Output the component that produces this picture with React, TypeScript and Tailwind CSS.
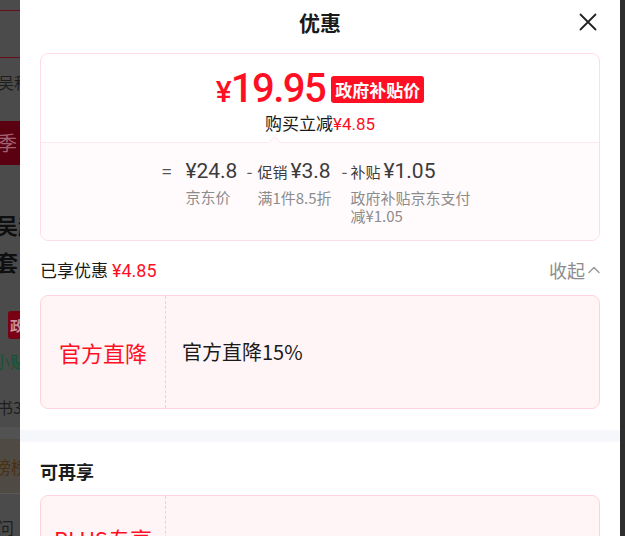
import React from "react";

const CJK = "font-['Noto_Sans_CJK_SC','Noto_Sans',sans-serif]";

function LeftStrip() {
  return (
    <div className={`w-[20px] shrink-0 h-full bg-[#4b4b4b] overflow-hidden flex flex-col ${CJK}`}>
      <div className="h-[10px]" />
      <div className="h-px bg-[#6a0d18]" />
      <div className="h-[46px]" />
      <div className="h-px bg-[#6a0d18]" />
      <div className="h-[64px] flex items-start pt-[16px]">
        <span className="ml-[-2px] text-[16px] leading-none text-[#1e1e1e] whitespace-nowrap">吴秝</span>
      </div>
      <div className="h-[44px] bg-[#5a0010] flex items-center">
        <span className="ml-[-3px] text-[20px] leading-none text-[#a26070] whitespace-nowrap">季</span>
      </div>
      <div className="h-[48px] shrink-0" />
      <span className="ml-[-4px] text-[22px] leading-none font-bold text-[#0f0f0f] whitespace-nowrap">吴赴</span>
      <div className="h-[15px] shrink-0" />
      <span className="ml-[-4px] text-[22px] leading-none font-bold text-[#0f0f0f] whitespace-nowrap">套</span>
      <div className="h-[39px] shrink-0" />
      <div className="ml-[8px] h-[28px] w-[20px] shrink-0 rounded-[3px] bg-[#7a0014] flex items-center pl-[2px]">
        <span className="text-[14px] leading-none text-[#c9909a] font-bold">政</span>
      </div>
      <div className="h-[14px] shrink-0" />
      <span className="ml-[-6px] text-[16px] leading-none text-[#13532a] whitespace-nowrap">小贴</span>
      <div className="h-[30px] shrink-0" />
      <span className="ml-[-3px] text-[16px] leading-none text-[#1e1e1e] whitespace-nowrap">书3</span>
      <div className="h-[12px] shrink-0" />
      <div className="h-[12px] shrink-0 bg-[#525252]" />
      <div className="h-[55px] shrink-0 bg-[#4f4a43] flex items-center border-b border-[#5a5a5a]">
        <span className="ml-[-6px] text-[17px] leading-none text-[#4a3012] whitespace-nowrap">榜榜</span>
      </div>
      <div className="h-[25px] shrink-0" />
      <span className="ml-[-3px] text-[17px] leading-none text-[#1e1e1e] whitespace-nowrap">问</span>
    </div>
  );
}

function CloseIcon() {
  return (
    <svg width="18" height="18" viewBox="0 0 18 18" fill="none">
      <path d="M1.5 1.5L16.5 16.5M16.5 1.5L1.5 16.5" stroke="#222" strokeWidth="1.8" strokeLinecap="round" />
    </svg>
  );
}

function ChevronUp() {
  return (
    <svg width="12" height="8" viewBox="0 0 12 8" fill="none">
      <path d="M1 6.5L6 1.5L11 6.5" stroke="#9a9a9a" strokeWidth="1.5" strokeLinecap="round" strokeLinejoin="round" />
    </svg>
  );
}

export default function App() {
  return (
    <div className="flex w-[625px] h-[536px] overflow-hidden bg-[#4b4b4b]">
      <LeftStrip />
      <div className={`w-[600px] shrink-0 h-full bg-white flex flex-col overflow-hidden ${CJK}`}>
        {/* header */}
        <div className="relative h-[44px] shrink-0 flex items-center justify-center">
          <span className="text-[21px] font-bold text-[#1a1a1a] leading-none">优惠</span>
          <div className="absolute right-[23px] top-[13px]">
            <CloseIcon />
          </div>
        </div>

        <div className="px-[20px] mt-[9px]">
          {/* summary card */}
          <div className="rounded-[8px] border border-[#ffdde5] overflow-hidden">
            <div className="h-[88px] flex flex-col items-center pt-[12px]">
              <div className="flex items-center h-[46px]">
                <span className="text-[#ff0f23] font-['Roboto',sans-serif] font-medium leading-none flex items-baseline tracking-[-1px]">
                  <span className="text-[30px]">¥</span>
                  <span className="text-[40px] tracking-[-1.5px]">19.95</span>
                </span>
                <span className="ml-[6px] h-[27px] px-[4px] rounded-[3px] bg-[#ff0f23] text-white text-[17px] font-bold flex items-center leading-none">
                  政府补贴价
                </span>
              </div>
              <div className="text-[17px] leading-none mt-[2px] text-[#1a1a1a]">
                购买立减<span className="text-[#ff0f23] font-['Roboto',sans-serif]">¥4.85</span>
              </div>
            </div>
            <div className="relative h-[98px] bg-[#fffafb] border-t border-[#ffe9ee]">
              <div className="absolute left-[229px] top-[-5px] w-[9px] h-[9px] rotate-45 bg-[#fffafb] border-l border-t border-[#ffe9ee]" />
              <div className="flex pl-[121px] pt-[16px] text-[#4a4a4a]">
                <span className="text-[17px] leading-[24px] mr-[14px] text-[#555]">=</span>
                <div className="flex flex-col w-[61px]">
                  <span className="text-[21px] leading-[24px] font-['Roboto',sans-serif] text-[#3c3c3c]">¥24.8</span>
                  <span className="text-[15px] leading-[17px] mt-[5px] text-[#8c8c8c]">京东价</span>
                </div>
                <span className="text-[17px] leading-[24px] w-[11px] text-[#555]">-</span>
                <div className="flex flex-col w-[84px]">
                  <span className="leading-[24px] text-[#3c3c3c] flex items-baseline">
                    <span className="text-[15px]">促销</span>
                    <span className="text-[21px] ml-[3px] font-['Roboto',sans-serif]">¥3.8</span>
                  </span>
                  <span className="text-[15px] leading-[17px] mt-[5px] text-[#8c8c8c] whitespace-nowrap">满1件8.5折</span>
                </div>
                <span className="text-[17px] leading-[24px] w-[9px] text-[#555]">-</span>
                <div className="flex flex-col w-[124px]">
                  <span className="leading-[24px] text-[#3c3c3c] flex items-baseline">
                    <span className="text-[15px]">补贴</span>
                    <span className="text-[21px] ml-[3px] font-['Roboto',sans-serif]">¥1.05</span>
                  </span>
                  <span className="text-[15px] leading-[18px] mt-[5px] text-[#8c8c8c]">政府补贴京东支付减¥1.05</span>
                </div>
              </div>
            </div>
          </div>

          {/* enjoyed row */}
          <div className="flex items-center justify-between mt-[17px] h-[24px]">
            <div className="flex items-baseline">
              <span className="text-[17px] text-[#1a1a1a]">已享优惠</span>
              <span className="text-[18px] ml-[4px] text-[#ff0f23] font-['Roboto',sans-serif]">¥4.85</span>
            </div>
            <div className="flex items-center text-[#8c8c8c] text-[18px]">
              收起
              <span className="ml-[3px]"><ChevronUp /></span>
            </div>
          </div>

          {/* official card */}
          <div className="mt-[13px] h-[114px] rounded-[8px] border border-[#ffd3dd] bg-[#fff5f7] flex">
            <div className="w-[125px] shrink-0 border-r border-dashed border-[#ffc7d3] flex items-center justify-center">
              <span className="text-[22px] text-[#ff0f23]">官方直降</span>
            </div>
            <div className="flex items-center pl-[16px]">
              <span className="text-[20px] text-[#1a1a1a]">官方直降15%</span>
            </div>
          </div>
        </div>

        {/* gray band */}
        <div className="mt-[21px] h-[12px] bg-[#f6f7fa] shrink-0" />

        <div className="px-[20px]">
          <div className="mt-[17px] text-[18px] font-bold text-[#1a1a1a] leading-[24px]">可再享</div>
          <div className="mt-[12px] h-[114px] rounded-[8px] border border-[#ffd3dd] bg-[#fff5f7] flex">
            <div className="w-[125px] shrink-0 border-r border-dashed border-[#ffc7d3] flex items-start justify-center pt-[26px]">
              <span className="text-[22px] text-[#ff0f23] whitespace-nowrap">PLUS专享</span>
            </div>
          </div>
        </div>
      </div>
      <div className="w-[5px] shrink-0 h-full bg-[#2e2e2e]" />
    </div>
  );
}
